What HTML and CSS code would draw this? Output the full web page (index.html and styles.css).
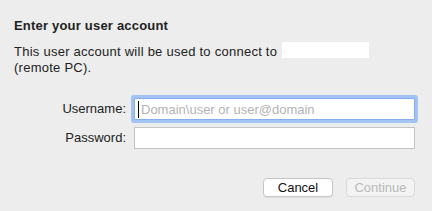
FILE: index.html
```html
<!DOCTYPE html>
<html>
<head>
<meta charset="utf-8">
<link rel="stylesheet" href="styles.css">
</head>
<body>
<div class="dialog">
  <div class="title">Enter your user account</div>
  <p class="desc">This user account will be used to connect to <span class="host"></span><br>(remote PC).</p>
  <div class="form">
    <div class="label">Username:</div>
    <div class="field focused"><span class="caret"></span><span class="placeholder">Domain\user or user@domain</span></div>
    <div class="label">Password:</div>
    <div class="field"></div>
  </div>
  <div class="buttons">
    <div class="btn cancel">Cancel</div>
    <div class="btn continue disabled">Continue</div>
  </div>
</div>
</body>
</html>
```
FILE: styles.css
```css
html, body {
  margin: 0;
  padding: 0;
  background: #ededed;
}
body {
  width: 432px;
  height: 211px;
  overflow: hidden;
  font-family: "Liberation Sans", Arial, sans-serif;
  font-size: 13px;
  color: #222;
}
.dialog {
  padding: 18px 17px 0 14px;
}
.title {
  font-weight: bold;
  line-height: 16px;
  letter-spacing: 0.2px;
}
.desc {
  margin: 10px 0 0 0;
  line-height: 16px;
  letter-spacing: 0.25px;
}
.host {
  display: inline-block;
  width: 87px;
  height: 16px;
  background: #fff;
  vertical-align: top;
  margin-top: -2px;
  margin-left: 1px;
}
.form {
  margin-top: 22px;
  display: grid;
  grid-template-columns: 112px 1fr;
  column-gap: 8px;
  row-gap: 7px;
  align-items: center;
}
.label {
  text-align: right;
  line-height: 22px;
}
.field {
  box-sizing: border-box;
  height: 22px;
  background: #fff;
  border: 1px solid #c3c3c3;
  display: flex;
  align-items: center;
  padding-left: 3px;
}
.field.focused {
  border-color: #86aeea;
  border-radius: 1px;
  box-shadow: 0 0 0 3px #a2c3f4;
}
.caret {
  width: 1px;
  height: 17px;
  background: #000;
  margin-right: 2px;
}
.placeholder {
  color: #b3b3b3;
  line-height: 20px;
  padding-top: 1px;
}
.buttons {
  margin-top: 29px;
  display: flex;
  justify-content: flex-end;
  gap: 13px;
}
.btn {
  box-sizing: border-box;
  height: 19px;
  line-height: 17px;
  text-align: center;
  border-radius: 4px;
  border: 1px solid #c6c6c6;
  background: #fff;
  box-shadow: 0 1px 0 rgba(0,0,0,0.06);
}
.cancel {
  width: 70px;
  color: #111;
}
.continue {
  width: 69px;
}
.disabled {
  background: #f3f3f3;
  border-color: #dadada;
  color: #b9b9b9;
  box-shadow: none;
}
```
